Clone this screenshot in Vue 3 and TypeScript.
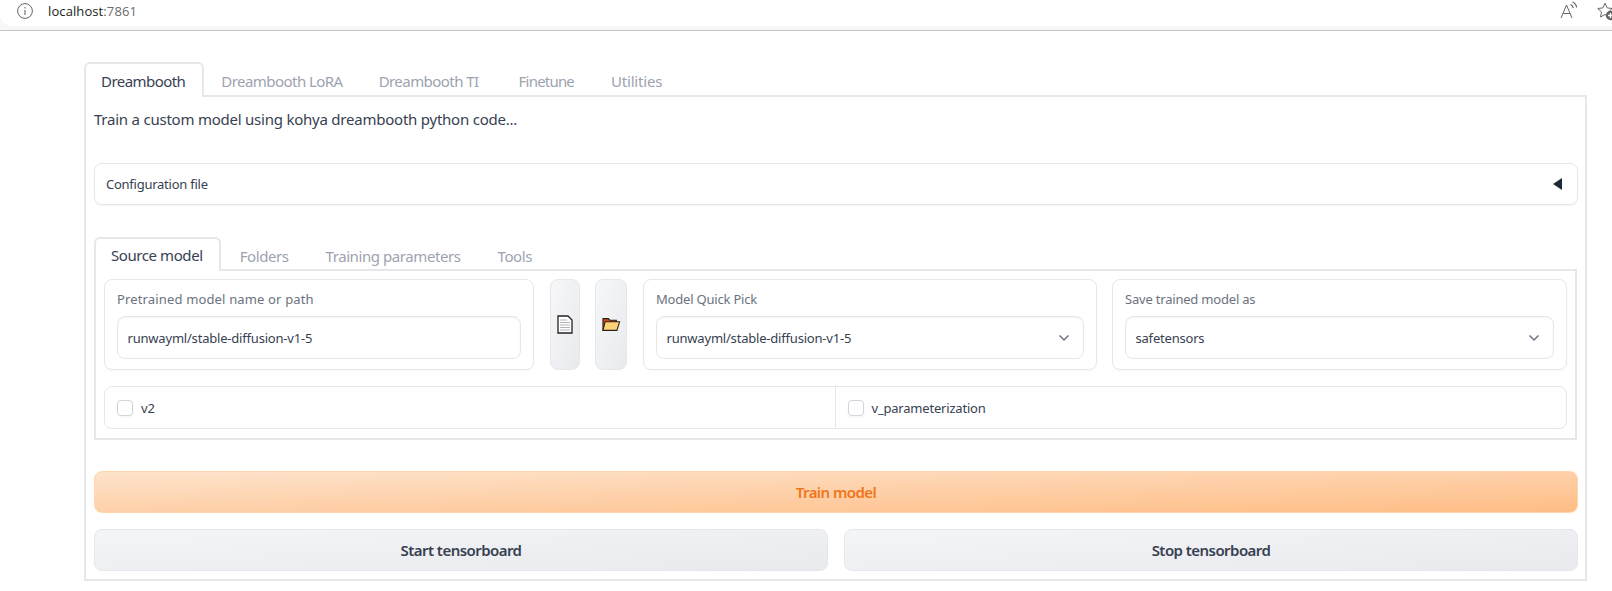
<script setup lang="ts">
const mainTabs: string[] = ['Dreambooth LoRA', 'Dreambooth TI', 'Finetune', 'Utilities']
const innerTabs: string[] = ['Folders', 'Training parameters', 'Tools']
</script>

<template>
  <div class="browser">
    <div class="address">
      <svg class="info" width="18" height="18" viewBox="0 0 18 18" fill="none" stroke="#666" stroke-width="1">
        <circle cx="9" cy="9" r="7.4" />
        <path d="M9 8v5M9 5v1.4" stroke-width="1.1" />
      </svg>
      <span class="host">localhost<span class="port">:7861</span></span>
      <span class="spacer"></span>
      <svg class="read" width="20" height="20" viewBox="0 0 20 20" fill="none" stroke="#666" stroke-width="1">
        <path d="M1 17L6.500 4 12 17M3 12.500h7" />
        <path d="M10.500 3.500c1.600.7 2.500 2 2.800 3.700M12.500 1c2.500 1.100 3.800 3 4.200 5.500" stroke-width="1.200" />
      </svg>
      <svg class="fav" width="20" height="20" viewBox="0 0 20 20" fill="none">
        <path d="M9 2.200l2.200 4.700 5 .6-3.700 3.500 1 5L9 13.500 4.500 16l1-5L1.800 7.500l5-.6z" stroke="#666" stroke-width="1" />
        <circle cx="14.500" cy="14.500" r="4.700" fill="#666" />
        <path d="M14.500 12v5M12 14.500h5" stroke="#fff" stroke-width="1.300" />
      </svg>
    </div>
    <div class="strip"></div>
  </div>

  <main class="page">
    <nav class="tabs main-tabs">
      <button class="tab active">Dreambooth</button>
      <button v-for="t in mainTabs" :key="t" class="tab">{{ t }}</button>
    </nav>
    <section class="panel outer">
      <p class="intro">Train a custom model using kohya dreambooth python code...</p>

      <div class="accordion">
        <span>Configuration file</span>
        <span class="caret"></span>
      </div>

      <nav class="tabs inner-tabs">
        <button class="tab active">Source model</button>
        <button v-for="t in innerTabs" :key="t" class="tab">{{ t }}</button>
      </nav>
      <section class="panel inner">
        <div class="fields">
          <label class="card">
            <span class="label wide">Pretrained model name or path</span>
            <span class="input">runwayml/stable-diffusion-v1-5</span>
          </label>
          <button class="tool doc">
            <svg width="16" height="19" viewBox="0 0 16 19">
              <path d="M1 1h10l4 4v13H1z" fill="#fff" stroke="#222" stroke-width="1.300" />
              <path d="M3 5h7M3 7.500h10M3 10h10M3 12.500h10M3 15h10" stroke="#b5b5b5" stroke-width="1" />
            </svg>
          </button>
          <button class="tool folder">
            <svg width="20" height="15" viewBox="0 0 18 14">
              <path d="M1.500 12.500V1.500h5l1.500 1.500h6v2" fill="#d9432b" stroke="#2a2310" stroke-width="1" />
              <path d="M1.500 12.500l2-8h13.500l-2.500 8z" fill="#ffd27a" stroke="#2a2310" stroke-width="1" />
            </svg>
          </button>
          <label class="card">
            <span class="label">Model Quick Pick</span>
            <span class="input select">runwayml/stable-diffusion-v1-5
              <svg width="12" height="8" viewBox="0 0 12 8" fill="none" stroke="#6b7280" stroke-width="1.500"><path d="M1.500 1.500L6 6l4.500-4.500" /></svg>
            </span>
          </label>
          <label class="card">
            <span class="label">Save trained model as</span>
            <span class="input select">safetensors
              <svg width="12" height="8" viewBox="0 0 12 8" fill="none" stroke="#6b7280" stroke-width="1.500"><path d="M1.500 1.500L6 6l4.500-4.500" /></svg>
            </span>
          </label>
        </div>
        <div class="checks">
          <label class="check"><span class="box"></span>v2</label>
          <label class="check"><span class="box"></span>v_parameterization</label>
        </div>
      </section>

      <button class="btn primary">Train model</button>
      <div class="btn-row">
        <button class="btn">Start tensorboard</button>
        <button class="btn">Stop tensorboard</button>
      </div>
    </section>
  </main>
</template>

<style>
html, body { margin: 0; background: #fff; }
</style>

<style scoped>
* { box-sizing: border-box; }
.browser { height: 31px; background: #f7f7f7; border-bottom: 1px solid #c4c4c4; display: flex; flex-direction: column; }
.address { height: 26px; background: #fff; border-bottom-left-radius: 12px; display: flex; align-items: center; padding: 0 0 4px 16px; font: 13px "Open Sans", sans-serif; }
.info { margin-right: 14px; }
.host { color: #222; letter-spacing: 0.1px; }
.port { color: #6b6b6b; }
.spacer { flex: 1; }
.read { margin-right: 16px; }
.fav { margin-right: -4px; }
.page { padding: 31px 25px 0 84px; font-family: "Noto Sans", sans-serif; color: #374151; width: 1612px; }
button { font-family: inherit; cursor: pointer; }
.tabs { display: flex; align-items: flex-end; position: relative; z-index: 1; margin-bottom: -2px; }
.tab { border: 2px solid transparent; border-bottom: 0; background: none; height: 33px; padding: 0 15px; margin-right: 2px; font-size: 15px; letter-spacing: -0.55px; color: #9ca3af; border-radius: 6px 6px 0 0; white-space: nowrap; }
.tab.active { border-color: #e5e7eb; color: #374151; background: #fff; height: 34px; }
.main-tabs .tab { height: 34px; }
.main-tabs .tab.active { height: 35px; padding-right: 17px; margin-right: 0; }
.main-tabs .tab:nth-child(4) { margin-left: 4px; letter-spacing: -0.8px; }
.main-tabs .tab:nth-child(5) { margin-left: 1px; letter-spacing: -0.2px; }
.panel { border: 2px solid #e5e7eb; }
.outer { height: 486px; padding: 0 7px 0 8px; }
.intro { margin: 0; height: 66px; padding-top: 11px; font-size: 15px; letter-spacing: -0.23px; line-height: 22px; color: #374151; }
.accordion { height: 42px; border: 1px solid #e5e7eb; border-radius: 8px; display: flex; align-items: center; justify-content: space-between; padding: 0 15px 0 11px; font-size: 13px; letter-spacing: -0.25px; box-shadow: 0 1px 2px rgba(0,0,0,.05); }
.caret { width: 0; height: 0; border: 6px solid transparent; border-right: 9px solid #1f2937; border-left: 0; }
.inner-tabs { margin-top: 32px; }
.inner-tabs .tab { padding: 0 15px; margin-right: 3px; letter-spacing: -0.42px; }
.inner-tabs .tab.active { padding-right: 16px; margin-right: 2px; }
.inner { height: 171px; padding: 8px; margin-right: 1px; }
.fields { display: grid; grid-template-columns: 430px 31px 33px 454px 455px; column-gap: 15px; height: 91px; }
.card { border: 1px solid #e5e7eb; border-radius: 8px; padding: 10px 12px; display: flex; flex-direction: column; gap: 8px; box-shadow: 0 1px 2px rgba(0,0,0,.04); }
.label { font-size: 13px; letter-spacing: -0.2px; color: #6b7280; line-height: 18px; }
.label.wide { letter-spacing: 0.15px; }
.input { height: 43px; border: 1px solid #e5e7eb; border-radius: 8px; display: flex; align-items: center; justify-content: space-between; padding: 0 9.500px; font-size: 13px; letter-spacing: -0.2px; color: #374151; box-shadow: inset 0 1px 2px rgba(0,0,0,.05); }
.select { padding-right: 13px; }
.tool { border: 1px solid #e5e7eb; border-radius: 8px; padding: 0; display: flex; align-items: center; justify-content: center; background: linear-gradient(to bottom right, #f6f7f8, #e9eaee); }
.doc { margin-left: 1px; }
.folder { margin-right: 1px; }
.checks { margin-top: 16px; height: 43px; border: 1px solid #e5e7eb; border-radius: 8px; display: grid; grid-template-columns: calc(50% - 1px) 1fr; }
.check { display: flex; align-items: center; gap: 8px; padding-left: 12px; font-size: 13px; letter-spacing: -0.2px; color: #374151; }
.check + .check { border-left: 1px solid #e5e7eb; }
.box { width: 16px; height: 16px; border: 1px solid #d1d5db; border-radius: 4px; background: #fff; box-shadow: 0 1px 2px rgba(0,0,0,.05); }
.btn { width: 100%; height: 42px; border: 1px solid #e5e7eb; border-radius: 8px; font-size: 15px; font-weight: 600; letter-spacing: -0.55px; color: #374151; background: linear-gradient(to bottom right, #f4f5f7, #e9eaee); }
.primary { margin-top: 31px; display: block; border-color: #fed7aa; color: #f0761a; background: linear-gradient(to bottom right, #fde3cc, #ffbd85); }
.btn-row { display: grid; grid-template-columns: 1fr 1fr; gap: 16px; margin-top: 16px; }
</style>
